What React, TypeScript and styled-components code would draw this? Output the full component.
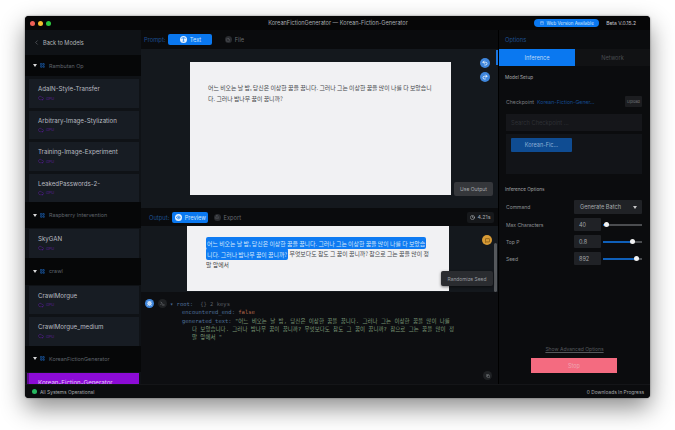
import React from "react";
import styled, { createGlobalStyle } from "styled-components";
import { ChevronLeft, Cloud, LayoutGrid, Undo2, Redo2, Type, File, Eye, Share, Clock, Bug, Terminal, ShoppingBag, Copy, MessageSquare } from "lucide-react";

const Global = createGlobalStyle`
  html, body { margin: 0; padding: 0; background: #fff; }
  body { font-family: Inter, "Noto Sans CJK KR", sans-serif; width: 675px; height: 430px; overflow: hidden; }
  * { box-sizing: border-box; }
`;
const Win = styled.div`
  width: 625px; height: 382px; margin: 16px 0 0 25px; background: #0b0c0e; border-radius: 4px; overflow: hidden;
  display: flex; flex-direction: column;
  box-shadow: 0 10px 24px rgba(0,0,0,.45), 0 0 2px rgba(0,0,0,.5);
`;
const TitleBar = styled.div`
  height: 14px; flex: none; background: #060607; display: flex; align-items: center; padding: 0 0 0 5px; position: relative;
`;
const Dot = styled.span<{ $c: string }>`
  width: 5px; height: 5px; border-radius: 50%; background: ${p => p.$c}; margin-right: 3px;
`;
const TitleText = styled.div`
  position: absolute; left: 0; width: 100%; text-align: center; padding-left: 1px; font-size: 5.6px; color: #a8abb0;
`;
const TitleRight = styled.div`
  margin-left: auto; display: flex; align-items: center; gap: 7px; padding-right: 14px; position: relative;
`;
const WebPill = styled.div`
  height: 8px; width: 65px; background: #0a78f0; border-radius: 4px; font-size: 4.5px; color: #d8e8fb; display: flex; align-items: center; justify-content: center; gap: 3px;
`;
const Beta = styled.div` font-size: 5px; color: #c6c8cc; `;
const Body = styled.div`
  flex: 1; min-height: 0; display: grid; grid-template-columns: 116px 357px 152px;
`;
const Side = styled.div`
  background: #0f1216; overflow: hidden; display: flex; flex-direction: column;
`;
const Back = styled.div`
  height: 25px; flex: none; display: flex; align-items: center; padding: 0 0 0 8px; gap: 3px; color: #b3b6ba; font-size: 5.6px;
  svg { color: #70747a; }
`;
const Group = styled.div<{ $h?: number }>`
  height: ${p => p.$h ?? 21}px; flex: none; background: #060708; display: flex; align-items: center; padding-left: 8px; font-size: 5.4px; color: #5e636a; gap: 3px;
`;
const Tri = styled.span`
  width: 0; height: 0; border-left: 2px solid transparent; border-right: 2px solid transparent; border-top: 3px solid #d8d8d8;
`;
const GroupIcon = styled(LayoutGrid)`
  color: #1f5da8; margin-right: 1px;
`;
const Cards = styled.div<{ $pad?: number }>`
  display: flex; flex-direction: column; gap: 3px; padding: ${p => p.$pad ?? 3}px 2px 0 4px; flex: none;
`;
const Card = styled.div<{ $active?: boolean }>`
  height: 28.5px; flex: none; background: ${p => (p.$active ? "#8c0bd6" : "#171c23")}; padding: 6px 0 0 9px; font-size: 6.15px; color: ${p => (p.$active ? "#e3c9f5" : "#b8bbc0")};
  white-space: nowrap; ${p => p.$active ? "box-shadow: -2px 0 0 #5d0b90;" : ""}
`;
const Gpu = styled.div`
  display: flex; align-items: center; gap: 2px; font-size: 3.8px; color: #5a1f96; margin-top: 3px;
`;
const Center = styled.div`
  display: flex; flex-direction: column; min-width: 0; background: #14181d; position: relative;
`;
const ToolRow = styled.div<{ $h: number; $pl: number }>`
  height: ${p => p.$h}px; flex: none; background: #0a0b0d; display: flex; align-items: center; padding-left: ${p => p.$pl}px; font-size: 6px; color: #1d4f8f; position: relative;
`;
const RowLabel = styled.span` margin-right: 3px; font-size: 5.8px; `;
const TabBtn = styled.div<{ $on?: boolean; $w: number }>`
  width: ${p => p.$w}px; height: 11px; border-radius: 2px; background: ${p => (p.$on ? "#0a78f0" : "transparent")}; color: ${p => (p.$on ? "#cfe4fb" : "#666a70")};
  font-size: 5.7px; display: flex; align-items: center; justify-content: center; gap: 3px;
`;
const TabIcon = styled.span<{ $on?: boolean }>`
  width: 7px; height: 7px; border-radius: 50%; background: ${p => (p.$on ? "#e6f1fd" : "#2a2c30")}; color: ${p => (p.$on ? "#0a78f0" : "#77797e")}; display: flex; align-items: center; justify-content: center;
`;
const Editor = styled.div`
  height: 159px; flex: none; position: relative; padding: 13px 0 0 49px; background: #14181d;
`;
const Paper = styled.div<{ $w: number; $h: number; $pl: number; $pt: number; $pr: number }>`
  width: ${p => p.$w}px; height: ${p => p.$h}px; background: #f1f1f3; padding: ${p => p.$pt}px ${p => p.$pr}px 0 ${p => p.$pl}px; font-size: 5.9px; line-height: 11px; color: #45474b; font-family: "Noto Sans CJK KR", sans-serif; word-break: break-all;
`;
const CircleBtn = styled.div<{ $top: number }>`
  position: absolute; right: 8px; top: ${p => p.$top}px; width: 10px; height: 10px; border-radius: 50%; background: #3f86dc; color: #fff; display: flex; align-items: center; justify-content: center;
`;
const BlueThumb = styled.div`
  position: absolute; right: 0; top: 1px; width: 2px; height: 15px; background: #1b76e0;
`;
const UseOutput = styled.div`
  position: absolute; right: 5px; bottom: 12px; width: 39px; height: 14px; background: #35373b; border-radius: 2px; color: #a6a8ab; font-size: 5px; display: flex; align-items: center; justify-content: center;
`;
const Timer = styled.div`
  margin-left: auto; margin-right: 4px; height: 11px; width: 27px; background: #16181b; border-radius: 2px; display: flex; align-items: center; justify-content: center; gap: 2px; color: #a3a6aa; font-size: 5.4px;
`;
const OutWrap = styled.div`
  height: 66px; flex: none; position: relative; padding-left: 46px; background: #14181d;
`;
const Sel = styled.span`
  background: #0f7bf2; color: #d5e7fb; border-radius: 2px; padding: 1.5px 1px; box-decoration-break: clone; -webkit-box-decoration-break: clone;
`;
const Coin = styled.div`
  position: absolute; right: 6px; top: 9px; width: 10px; height: 10px; border-radius: 50%; background: #d89b36; color: #6e4c10; display: flex; align-items: center; justify-content: center;
`;
const Thumb = styled.div`
  position: absolute; right: 1px; top: 17px; width: 3px; height: 49px; background: #55585c; border-radius: 2px;
`;
const Tip = styled.div`
  position: absolute; right: 5px; top: 45px; width: 52px; height: 15px; background: #2a2c30; border-radius: 2px; color: #9a9da1; font-size: 4.9px; display: flex; align-items: center; justify-content: center; box-shadow: 0 1px 3px rgba(0,0,0,.5);
`;
const Json = styled.div`
  flex: 1; min-height: 0; background: #0d0e11; position: relative; font-family: "DejaVu Sans Mono", "Noto Sans CJK KR", monospace; font-size: 5.5px; line-height: 8.3px; padding: 8px 8px 0 29px; color: #7c9a78;
`;
const JsonIcons = styled.div`
  position: absolute; left: 4px; top: 7px; display: flex; gap: 4px; align-items: center;
`;
const Round = styled.span<{ $blue?: boolean }>`
  width: 9px; height: 9px; border-radius: 50%; background: ${p => (p.$blue ? "#3f86dc" : "#1f2124")}; color: ${p => (p.$blue ? "#fff" : "#83868a")}; display: flex; align-items: center; justify-content: center;
`;
const CornerBtn = styled(Round)`
  position: absolute; right: 6px; bottom: 4px; left: auto;
`;
const Key = styled.span` color: #4f6f98; `;
const Mute = styled.span` color: #5a5e63; `;
const Bool = styled.span` color: #b3674a; `;
const JRoot = styled.div` display: flex; gap: 7px; align-items: center; margin-bottom: 0; `;
const JRow = styled.div` padding-left: 12px; `;
const JText = styled.div` padding-left: 10px; `;
const Right = styled.div`
  background: #0b0c0e; display: flex; flex-direction: column; min-width: 0; border-left: 1px solid #000;
`;
const OptHead = styled.div`
  height: 19px; flex: none; display: flex; align-items: center; padding-left: 6px; font-size: 5.8px; color: #1d4f8f;
`;
const Tabs = styled.div`
  height: 17px; flex: none; display: grid; grid-template-columns: 76px 75px; font-size: 5.6px;
`;
const RTab = styled.div<{ $on?: boolean }>`
  background: ${p => (p.$on ? "#0a78f0" : "#111214")}; color: ${p => (p.$on ? "#bcd9f8" : "#4a4d51")}; display: flex; align-items: center; justify-content: center;
`;
const Section = styled.div<{ $mt: number }>`
  font-size: 4.7px; color: #a6a8ab; margin: ${p => p.$mt}px 0 0 6px;
`;
const CheckRow = styled.div`
  display: flex; align-items: center; margin: 16px 8px 0 7px; font-size: 5.2px; color: #7b7e82; height: 11px;
`;
const CheckName = styled.span` color: #154b90; margin-left: 3px; `;
const Upload = styled.span`
  margin-left: auto; width: 17px; height: 11px; background: #1c1d20; color: #75787c; font-size: 3.8px; display: flex; align-items: center; justify-content: center; border-radius: 1px;
`;
const Search = styled.div`
  margin: 7px 8px 0 7px; height: 17px; background: #15161a; color: #2e3035; font-size: 5.7px; display: flex; align-items: center; padding-left: 5px;
`;
const ChipBox = styled.div`
  margin: 3px 8px 0 7px; height: 40px; background: #121418; padding: 4px 0 0 5px;
`;
const Chip = styled.div`
  width: 61px; height: 13.5px; background: #0f4c92; color: #8db0d6; font-size: 5.5px; border-radius: 1px; display: flex; align-items: center; justify-content: center;
`;
const OptRow = styled.div<{ $mt: number }>`
  display: grid; grid-template-columns: 68px 27px 1fr; align-items: center; margin: ${p => p.$mt}px 8px 0 7px; font-size: 5px; color: #8d9094;
`;
const SelectBox = styled.div`
  grid-column: 2 / 4; height: 14px; background: #202226; color: #a6a8ac; font-size: 5.6px; display: flex; align-items: center; padding: 0 5px 0 6px; justify-content: space-between; border-radius: 1px;
`;
const SelectTri = styled.span`
  width: 0; height: 0; border-left: 2.5px solid transparent; border-right: 2.5px solid transparent; border-top: 3px solid #c5c6c8;
`;
const NumBox = styled.div`
  height: 13px; background: #202226; color: #a6a8ac; font-size: 5.5px; display: flex; align-items: center; padding-left: 5px; border-radius: 1px;
`;
const Slider = styled.div`
  height: 2px; margin-left: 2px; background: #4b4d50; position: relative;
`;
const Fill = styled.div`
  height: 100%; background: #0f5fb8;
`;
const Knob = styled.div`
  position: absolute; top: -1.5px; width: 5px; height: 5px; border-radius: 50%; background: #f2f2f2; margin-left: -2.5px;
`;
const RSpacer = styled.div` flex: 1; `;
const Advanced = styled.div`
  text-align: center; font-size: 5px; color: #55585c; text-decoration: underline; margin-bottom: 6px;
`;
const Stop = styled.div`
  align-self: center; width: 86px; height: 15px; background: #f46b80; color: #f0a6b2; font-size: 5.5px; display: flex; align-items: center; justify-content: center; margin: 0 0 11px -1px;
`;
const Status = styled.div`
  height: 14px; flex: none; background: #0b0c0e; display: flex; align-items: center; justify-content: space-between; padding: 0 6px 0 7px; font-size: 4.85px; color: #a5a8ab; border-top: 1px solid #141518;
`;
const StatusL = styled.div` display: flex; align-items: center; gap: 3px; `;
const Green = styled.span` width: 5px; height: 5px; border-radius: 50%; background: #27b860; `;

const Model = ({ name, active }: { name: string; active?: boolean }) => (
  <Card $active={active}>
    {name}
    {!active && <Gpu><Cloud size={6} strokeWidth={2} />GPU</Gpu>}
  </Card>
);
const Head = ({ name, h }: { name: string; h?: number }) => (
  <Group $h={h}><Tri /><GroupIcon size={5} strokeWidth={3} />{name}</Group>
);
const Range = ({ v }: { v: number }) => (
  <Slider><Fill style={{ width: `${v}%` }} /><Knob style={{ left: `${v}%` }} /></Slider>
);

export default function App() {
  return (
    <>
      <Global />
      <Win>
        <TitleBar>
          <Dot $c="#ed5f56" /><Dot $c="#f5bd2f" /><Dot $c="#2dc83f" />
          <TitleText>KoreanFictionGenerator — Korean-Fiction-Generator</TitleText>
          <TitleRight>
            <WebPill><ShoppingBag size={4} />Web Version Available</WebPill>
            <Beta>Beta V.0.15.2</Beta>
          </TitleRight>
        </TitleBar>
        <Body>
          <Side>
            <Back><ChevronLeft size={7} />Back to Models</Back>
            <Head name="Rambutan Op" />
            <Cards>
              <Model name="AdaIN-Style-Transfer" />
              <Model name="Arbitrary-Image-Stylization" />
              <Model name="Training-Image-Experiment" />
              <Model name="LeakedPasswords-2-" />
            </Cards>
            <Head name="Raspberry Intervention" h={26} />
            <Cards $pad={1}><Model name="SkyGAN" /></Cards>
            <Head name="crawl" h={27} />
            <Cards $pad={1}>
              <Model name="CrawlMorgue" />
              <Model name="CrawlMorgue_medium" />
            </Cards>
            <Head name="KoreanFictionGenerator" h={26} />
            <Cards $pad={1}><Model name="Korean-Fiction-Generator" active /></Cards>
          </Side>
          <Center>
            <ToolRow $h={19} $pl={3}>
              <RowLabel>Prompt:</RowLabel>
              <TabBtn $on $w={44}><TabIcon $on><Type size={5} strokeWidth={3} /></TabIcon>Text</TabBtn>
              <TabBtn $w={44}><TabIcon><File size={4} /></TabIcon>File</TabBtn>
            </ToolRow>
            <Editor>
              <Paper $w={261} $h={133} $pl={18} $pt={20} $pr={16}>
                어느 비오는 날 밤, 당신은 이상한 꿈을 꿉니다. 그러나 그는 이상한 꿈을 많이 나를 다 보았습니다. 그러나 밤나무 꿈이 꿉니까?
              </Paper>
              <BlueThumb />
              <CircleBtn $top={9}><Undo2 size={6} strokeWidth={3} /></CircleBtn>
              <CircleBtn $top={23}><Redo2 size={6} strokeWidth={3} /></CircleBtn>
              <UseOutput>Use Output</UseOutput>
            </Editor>
            <ToolRow $h={18} $pl={8}>
              <RowLabel>Output:</RowLabel>
              <TabBtn $on $w={36}><TabIcon $on><Eye size={5} strokeWidth={3} /></TabIcon>Preview</TabBtn>
              <TabBtn $w={38}><TabIcon><Share size={4} /></TabIcon>Export</TabBtn>
              <Timer><Clock size={5} strokeWidth={3} />4.21s</Timer>
            </ToolRow>
            <OutWrap>
              <Paper $w={262} $h={65} $pl={19} $pt={11} $pr={19}>
                <Sel>어느 비오는 날 밤, 당신은 이상한 꿈을 꿉니다. 그러나 그는 이상한 꿈을 많이 나를 다 보았습니다. 그러나 밤나무 꿈이 꿉니까?</Sel> 무엇보다도 참도 그 꿈이 꿉니까? 참으로 그는 꿈을 많이 정말 앞에서
              </Paper>
              <Coin><MessageSquare size={5} strokeWidth={3} /></Coin>
              <Thumb />
              <Tip>Randomize Seed</Tip>
            </OutWrap>
            <Json>
              <JsonIcons>
                <Round $blue><Bug size={5} strokeWidth={3} /></Round>
                <Round><Terminal size={5} strokeWidth={3} /></Round>
              </JsonIcons>
              <JRoot><Key>▾ root:</Key><Mute>{"{}"} 2 keys</Mute></JRoot>
              <JRow><Key>encountered_end:</Key> <Bool>false</Bool></JRow>
              <JRow>
                <Key>generated_text:</Key> "어느 비오는 날 밤, 당신은 이상한 꿈을 꿉니다. 그러나 그는 이상한 꿈을 많이 나를
                <JText>다 보았습니다. 그러나 밤나무 꿈이 꿉니까? 무엇보다도 참도 그 꿈이 꿉니까? 참으로 그는 꿈을 많이 정</JText>
                <JText>말 앞에서 "</JText>
              </JRow>
              <CornerBtn><Copy size={4} strokeWidth={3} /></CornerBtn>
            </Json>
          </Center>
          <Right>
            <OptHead>Options</OptHead>
            <Tabs><RTab $on>Inference</RTab><RTab>Network</RTab></Tabs>
            <Section $mt={8}>Model Setup</Section>
            <CheckRow>Checkpoint<CheckName>Korean-Fiction-Gener...</CheckName><Upload>Upload</Upload></CheckRow>
            <Search>Search Checkpoint ...</Search>
            <ChipBox><Chip>Korean-Fic...</Chip></ChipBox>
            <Section $mt={12}>Inference Options</Section>
            <OptRow $mt={8}>Command<SelectBox>Generate Batch<SelectTri /></SelectBox></OptRow>
            <OptRow $mt={4}>Max Characters<NumBox>40</NumBox><Range v={8} /></OptRow>
            <OptRow $mt={4}>Top P<NumBox>0.8</NumBox><Range v={75} /></OptRow>
            <OptRow $mt={4}>Seed<NumBox>892</NumBox><Range v={85} /></OptRow>
            <RSpacer />
            <Advanced>Show Advanced Options</Advanced>
            <Stop>Stop</Stop>
          </Right>
        </Body>
        <Status>
          <StatusL><Green />All Systems Operational</StatusL>
          <span>0 Downloads In Progress</span>
        </Status>
      </Win>
    </>
  );
}
